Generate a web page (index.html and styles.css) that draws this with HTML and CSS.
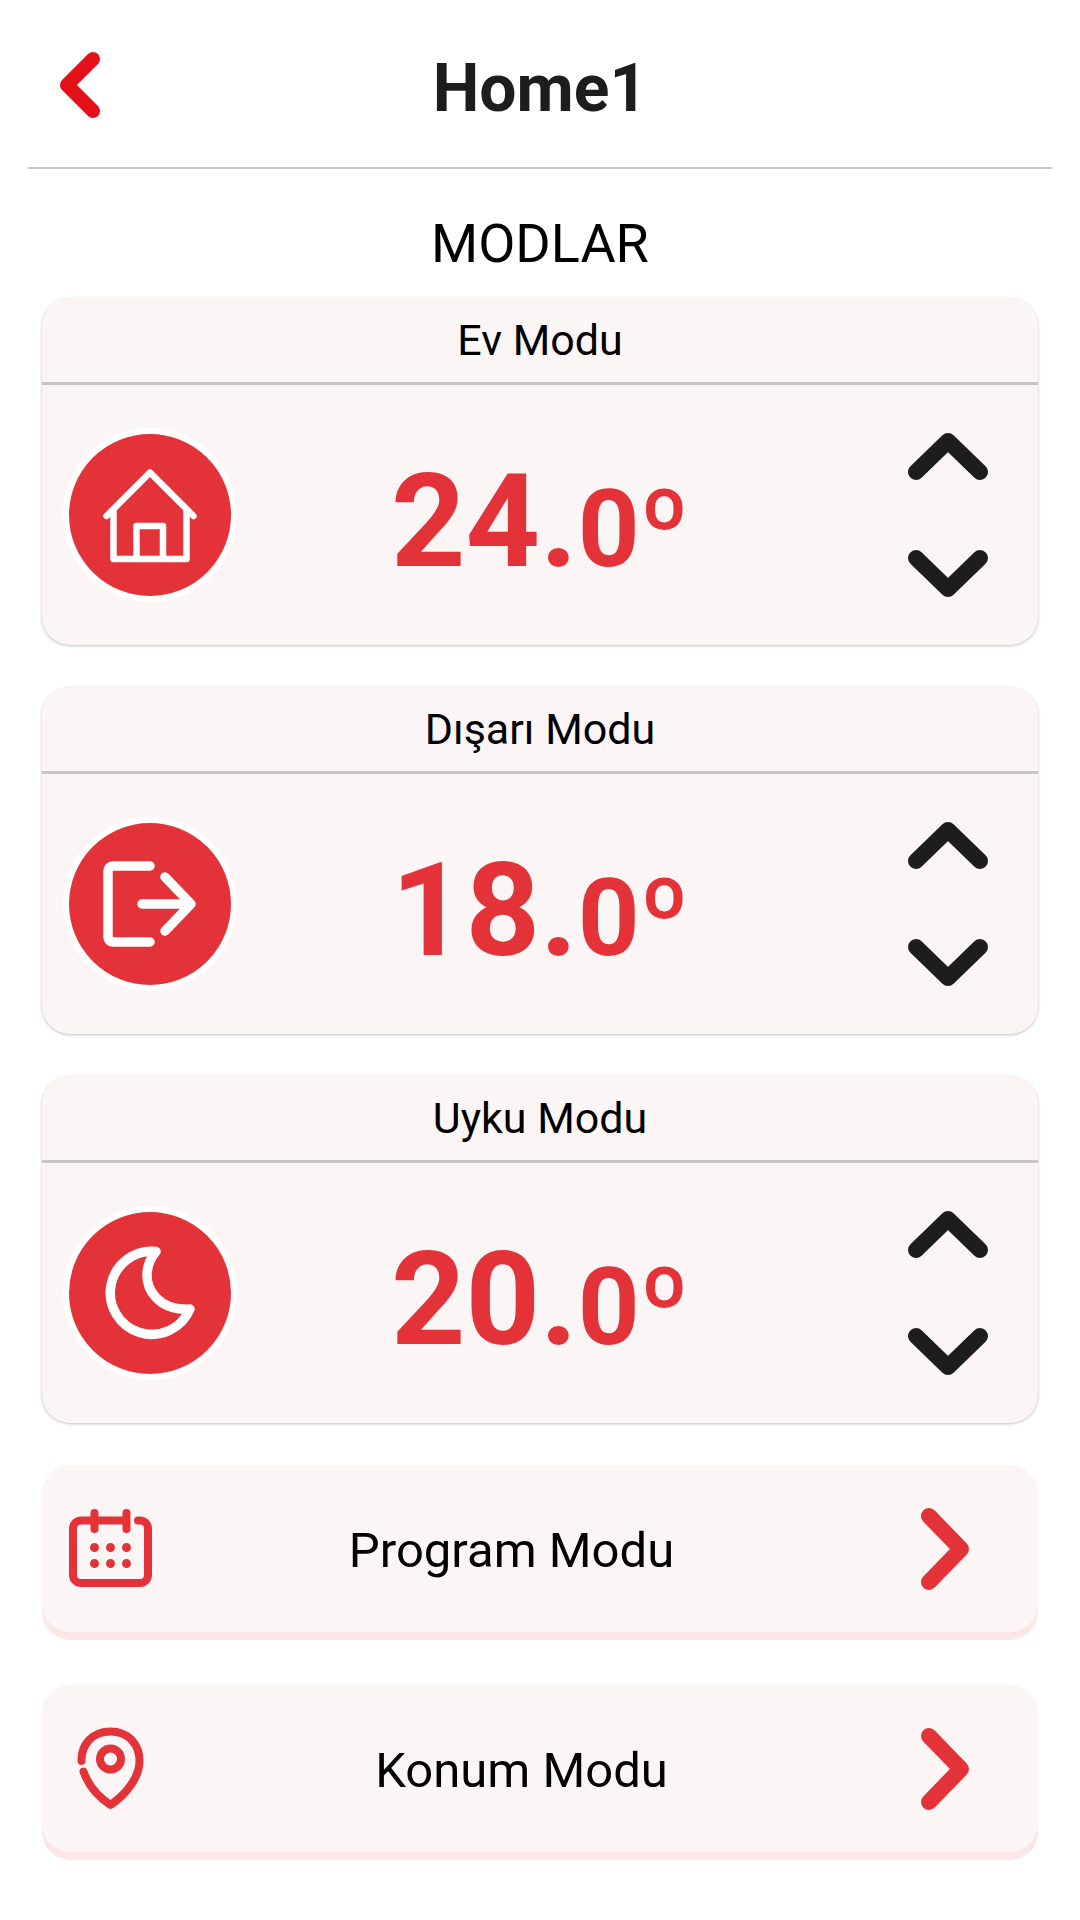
FILE: index.html
```html
<!DOCTYPE html>
<html lang="tr">
<head>
    <meta charset="UTF-8">
    <meta name="viewport" content="width=device-width, initial-scale=1.0">
    <title>Home1</title>
    <link rel="stylesheet" href="styles.css">
</head>
<body>
    <header class="header">
        <button class="back" aria-label="Geri">
            <svg width="42" height="68" viewBox="0 0 42 68"><path d="M33 8 7 34l26 26"/></svg>
        </button>
        <h1>Home1</h1>
    </header>
    <main class="container">
        <h2>MODLAR</h2>

        <section class="card">
            <h3>Ev Modu</h3>
            <div class="card-body">
                <div class="mode-icon">
                    <svg class="thin" viewBox="0 0 162 162">
                        <path d="M37.5 82 81 38.5 124.5 82M44.500 77v48h73V77M67.5 125V92H94v33"/>
                    </svg>
                </div>
                <div class="temp">24.<span>0º</span></div>
                <div class="arrows">
                    <button aria-label="Arttır"><svg width="80" height="48" viewBox="0 0 80 48"><path d="M8 39 40 8l32 31"/></svg></button>
                    <button aria-label="Azalt"><svg width="80" height="48" viewBox="0 0 80 48"><path d="m8 8 32 31L72 8"/></svg></button>
                </div>
            </div>
        </section>

        <section class="card">
            <h3>Dışarı Modu</h3>
            <div class="card-body">
                <div class="mode-icon">
                    <svg viewBox="0 0 162 162">
                        <path d="M81 43H44a5 5 0 0 0-5 5v66a5 5 0 0 0 5 5h37M73 81h49M96 54l26 27-26 27"/>
                    </svg>
                </div>
                <div class="temp">18.<span>0º</span></div>
                <div class="arrows">
                    <button aria-label="Arttır"><svg width="80" height="48" viewBox="0 0 80 48"><path d="M8 39 40 8l32 31"/></svg></button>
                    <button aria-label="Azalt"><svg width="80" height="48" viewBox="0 0 80 48"><path d="m8 8 32 31L72 8"/></svg></button>
                </div>
            </div>
        </section>

        <section class="card">
            <h3>Uyku Modu</h3>
            <div class="card-body">
                <div class="mode-icon">
                    <svg viewBox="0 0 162 162">
                        <path d="M87 39.5C75 54 75 73 87 85.5c9 9.5 21 12.500 34 11.500A41.5 41.5 0 1 1 87 39.5z"/>
                    </svg>
                </div>
                <div class="temp">20.<span>0º</span></div>
                <div class="arrows">
                    <button aria-label="Arttır"><svg width="80" height="48" viewBox="0 0 80 48"><path d="M8 39 40 8l32 31"/></svg></button>
                    <button aria-label="Azalt"><svg width="80" height="48" viewBox="0 0 80 48"><path d="m8 8 32 31L72 8"/></svg></button>
                </div>
            </div>
        </section>

        <a class="row" href="#program">
            <svg class="row-icon" viewBox="0 0 84 84">
                <path d="M57.5 13.500H12a8 8 0 0 0-8 8V68a8 8 0 0 0 8 8h59a8 8 0 0 0 8-8V21.5a8 8 0 0 0-8-8h-2M25.5 6v16M57.5 6v16"/>
                <path class="dots" d="M25.5 40.5h0M41.5 40.5h0M57.5 40.5h0M25.5 56.5h0M41.5 56.5h0M57.5 56.5h0"/>
            </svg>
            <span class="row-text">Program Modu</span>
            <span class="row-arrow">
                <svg width="48" height="82" viewBox="0 0 48 82"><path d="m8 8 32 33L8 74"/></svg>
            </span>
        </a>

        <a class="row" href="#konum">
            <svg class="row-icon pin" viewBox="0 0 84 84">
                <path d="M12.500 34C12 17 24 4.500 41.500 4.500S70.500 17 70.500 34c0 16-13 33-29 44C31 71 19.500 59 14.500 44.500"/>
                <circle cx="41.500" cy="32" r="10.500"/>
            </svg>
            <span class="row-text">Konum Modu</span>
            <span class="row-arrow">
                <svg width="48" height="82" viewBox="0 0 48 82"><path d="m8 8 32 33L8 74"/></svg>
            </span>
        </a>
    </main>
</body>
</html>
```

FILE: styles.css
```css
body {
    font-family: Roboto, sans-serif;
    margin: 0;
    background-color: #fff;
    color: #000;
}
h1, h2, h3 {
    margin: 0;
    font-weight: normal;
    text-align: center;
}
button {
    display: block;
    padding: 0;
    border: none;
    background: none;
    cursor: pointer;
}
svg {
    display: block;
    fill: none;
    stroke-linecap: round;
    stroke-linejoin: round;
}
.header {
    display: grid;
    grid-template-columns: 1fr auto 1fr;
    align-items: center;
    margin: 0 28px;
    padding: 49px 32px 39px;
    border-bottom: 2px solid #c8c8c8;
}
.header h1 {
    font-size: 66px;
    line-height: 79px;
    font-weight: bold;
    color: #1d1d1b;
}
.back {
    justify-self: start;
    margin-bottom: 7px;
}
.back svg {
    stroke: #e30f19;
    stroke-width: 14;
}
.container {
    padding: 43px 42px;
}
.container h2 {
    margin-bottom: 22px;
    font-size: 54px;
    line-height: 64px;
}
.card {
    margin-bottom: 42px;
    border-radius: 28px;
    background-color: #fbf5f5;
    box-shadow: 0 1px 3px rgba(0, 0, 0, 0.25);
}
.card h3 {
    border-bottom: 3px solid #c9c4c4;
    font-size: 43px;
    line-height: 84px;
}
.card-body {
    display: grid;
    grid-template-columns: 1fr auto 1fr;
    align-items: center;
    min-height: 260px;
}
.mode-icon {
    width: 162px;
    height: 162px;
    margin-left: 21px;
    border: 6px solid #fff;
    border-radius: 50%;
    background-color: #e33338;
}
.mode-icon svg {
    stroke: #fff;
    stroke-width: 9.5;
}
.mode-icon .thin {
    stroke-width: 6.5;
}
.temp {
    padding-top: 12px;
    font-size: 130px;
    font-weight: bold;
    color: #e33338;
}
.temp span {
    font-size: 108px;
}
.arrows {
    display: flex;
    flex-direction: column;
    gap: 69px;
    justify-self: end;
    margin-right: 50px;
}
.arrows svg {
    stroke: #1d1d1b;
    stroke-width: 16;
}
.row {
    display: flex;
    align-items: center;
    min-height: 167px;
    margin-bottom: 53px;
    padding: 0 18px 0 27px;
    border-radius: 28px;
    background-color: #fbf5f5;
    box-shadow: 0 8px 0 #fbe6e8;
    color: #000;
    text-decoration: none;
}
.row:last-child {
    margin-bottom: 0;
}
.row-icon {
    width: 84px;
    height: 84px;
    stroke: #e33338;
    stroke-width: 8;
}
.row-icon .dots {
    stroke-width: 9;
}
.pin {
    margin-right: 20px;
}
.row-text {
    flex: 1;
    padding-top: 4px;
    font-size: 49px;
    text-align: center;
}
.row-arrow {
    display: flex;
    justify-content: center;
    width: 150px;
}
.row-arrow svg {
    stroke: #e33338;
    stroke-width: 16;
}
```
